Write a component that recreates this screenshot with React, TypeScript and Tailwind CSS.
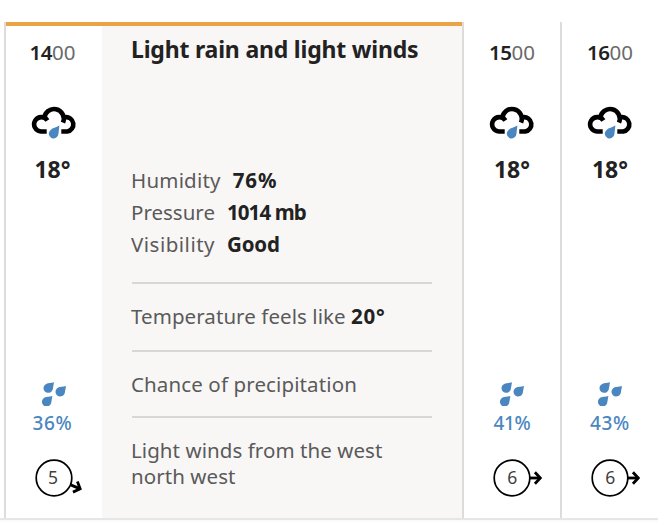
type Hour = {
  hour: string;
  temp: number;
  rain: string;
  rainClass: string;
  wind: number;
  angle: number;
};

const hours: Hour[] = [
  { hour: "14", temp: 18, rain: "36%", rainClass: "tracking-[0.7px]", wind: 5, angle: 22.5 },
  { hour: "15", temp: 18, rain: "41%", rainClass: "tracking-[-0.3px]", wind: 6, angle: 0 },
  { hour: "16", temp: 18, rain: "43%", rainClass: "tracking-[0.7px]", wind: 6, angle: 0 },
];

const stats = [
  { label: "Humidity", value: "76%", labelClass: "tracking-[0.2px]", valueClass: "ml-3 tracking-[0.9px]" },
  { label: "Pressure", value: "1014 mb", labelClass: "tracking-[0px]", valueClass: "ml-3 tracking-[-0.9px]" },
  { label: "Visibility", value: "Good", labelClass: "tracking-[0.5px]", valueClass: "ml-3 tracking-[-0.2px]" },
];

function RainCloud() {
  return (
    <svg width="46" height="34" viewBox="0 0 46 34" fill="none" className="shrink-0">
      <g stroke="#000" strokeWidth="4.6">
        <path d="M15.7 26.5H10A7.2 7.2 0 1 1 16.4 15.4" />
        <path d="M13.2 13.5A9.8 9.8 0 1 1 32 17.7" />
        <path d="M34 12.2A7.2 7.2 0 1 1 36.2 26.5H30.3" />
      </g>
      <path
        d="M28.4 20.6L27.4 28.9A4.8 4.8 0 1 1 19.6 24.9C21.8 23.1 25 22.4 28.4 20.6Z"
        fill="#4a86c0"
      />
    </svg>
  );
}

function Raindrops() {
  const drop = "M10.4 0L9.3 6.3A4.7 4.7 0 1 1 2.6 1.6C4.6 0.6 7.6 0.9 10.4 0Z";
  return (
    <svg width="24" height="24" viewBox="0 0 24 24" fill="#4a86c0" className="shrink-0">
      <path d={drop} transform="translate(1.6 0.3)" />
      <path d={drop} transform="translate(13.6 4)" />
      <path d={drop} transform="translate(0 14)" />
    </svg>
  );
}

function Wind({ speed, angle }: { speed: number; angle: number }) {
  return (
    <svg width="64" height="40" viewBox="-32 -20 64 40" className="shrink-0 overflow-visible">
      <circle r="17.8" fill="none" stroke="#000" strokeWidth="1.7" />
      <g transform={`rotate(${angle})`} fill="none" stroke="#000" strokeWidth="2.8">
        <path d="M18 0H28.5" />
        <path d="M22.9 -5.8L28.3 0L22.9 5.8" />
      </g>
      <text x={angle ? -1 : 0.3} y="6" textAnchor="middle" fontSize="17.5" fill="#404040">
        {speed}
      </text>
    </svg>
  );
}

function HourColumn({ data, selected }: { data: Hour; selected?: boolean }) {
  const nudge = selected ? "pr-[3px]" : "";
  return (
    <div className="flex w-24 shrink-0 flex-col items-center">
      <p className={`mt-3 text-[20.5px] leading-7 text-[#6a6a6a] ${nudge}`}>
        <span className="font-semibold tracking-[-0.4px] text-[#222]">{data.hour}</span>00
      </p>
      <div className="mt-[39px] h-[34px]">
        <RainCloud />
      </div>
      <p className={`mt-[15px] text-[23px] leading-[30px] font-bold text-[#222] ${nudge}`}>
        {data.temp}°
      </p>
      <div className="mt-[198px] h-6">
        <Raindrops />
      </div>
      <p className={`mt-1 text-[19px] leading-[26px] font-medium text-[#4a86c0] ${data.rainClass} ${nudge}`}>
        {data.rain}
      </p>
      <div className="mt-[22px] h-10">
        <Wind speed={data.wind} angle={data.angle} />
      </div>
    </div>
  );
}

function Details() {
  return (
    <div className="w-[360px] bg-[#f8f7f6] pr-[30px] pl-[30px] text-[20.5px] text-[#5a5a5a]">
      <h2 className="mt-2 -ml-px text-[23px] leading-[30px] font-bold tracking-[-0.2px] whitespace-nowrap text-[#222]">
        Light rain and light winds
      </h2>
      <dl className="mt-[100px] -ml-px">
        {stats.map((s) => (
          <div key={s.label} className="flex leading-8">
            <dt className={s.labelClass}>{s.label}</dt>
            <dd className={`font-bold text-[#222] ${s.valueClass}`}>{s.value}</dd>
          </div>
        ))}
      </dl>
      <div className="mt-[22px] h-[68px] border-t-2 border-[#d8d7d6] pt-4">
        <p className="-ml-px leading-8 tracking-[0.07px] whitespace-nowrap">
          Temperature feels like <b className="tracking-[0.7px] text-[#222]">20°</b>
        </p>
      </div>
      <div className="h-[66px] border-t-2 border-[#d8d7d6] pt-4">
        <p className="-ml-px leading-8 tracking-[0.12px] whitespace-nowrap">Chance of precipitation</p>
      </div>
      <div className="border-t-2 border-[#d8d7d6] pt-[19px]">
        <p className="-ml-px leading-[26px] tracking-[0.07px] whitespace-nowrap">
          Light winds from the west
          <br />
          north west
        </p>
      </div>
    </div>
  );
}

export default function App() {
  return (
    <main className="h-[522px] w-[658px] overflow-hidden bg-[#fbfbfb] font-['Noto_Sans','Open_Sans',sans-serif]">
      <div className="flex h-[520px] border-b-2 border-[#e6e6e6] bg-white pt-[22px] pl-1">
        <section className="flex border-l-2 border-[#dcdcdc]">
          <div className="flex border-t-4 border-[#eaa445]">
            <HourColumn data={hours[0]} selected />
            <Details />
          </div>
        </section>
        {hours.slice(1).map((h) => (
          <section key={h.hour} className="flex border-l-2 border-[#dcdcdc] pt-1">
            <HourColumn data={h} />
          </section>
        ))}
      </div>
    </main>
  );
}
